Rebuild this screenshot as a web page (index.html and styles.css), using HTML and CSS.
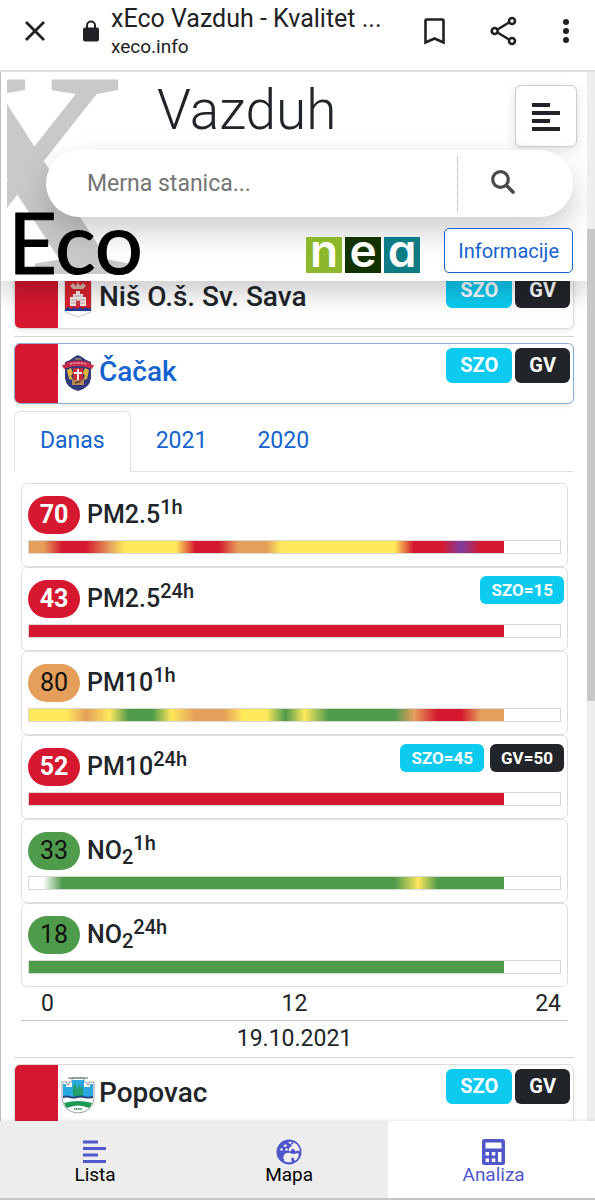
FILE: index.html
```html
<!DOCTYPE html>
<html lang="sr-Latn">
<head>
  <meta charset="UTF-8">
  <meta name="viewport" content="width=device-width, initial-scale=1.0">
  <title>xEco Vazduh - Kvalitet vazduha</title>
  <link rel="stylesheet" href="styles.css">
</head>
<body>
  <div class="browser-bar">
    <button class="icon-btn" aria-label="Zatvori">
      <svg width="20" height="20" viewBox="0 0 20 20"><path d="M1 1L19 19M19 1L1 19" stroke="#202124" stroke-width="2.8"/></svg>
    </button>
    <svg class="lock" width="16" height="22" viewBox="0 0 16 22"><path d="M4 8V5.500a4 4 0 0 1 8 0V8" fill="none" stroke="#202124" stroke-width="2"/><rect y="7.5" width="16" height="14" rx="2" fill="#202124"/></svg>
    <div class="page-info">
      <div class="page-title">xEco Vazduh - Kvalitet ...</div>
      <div class="page-host">xeco.info</div>
    </div>
    <div class="browser-actions">
      <button class="icon-btn" aria-label="Obeleži">
        <svg width="21" height="27" viewBox="0 0 21 27"><path d="M1.500 2.500a1 1 0 0 1 1-1h16a1 1 0 0 1 1 1V24.500l-9-4-9 4z" fill="none" stroke="#202124" stroke-width="2.6"/></svg>
      </button>
      <button class="icon-btn" aria-label="Podeli">
        <svg width="27" height="30" viewBox="0 0 27 30"><g fill="none" stroke="#202124" stroke-width="2.6"><path d="M7.500 13.500L19 6.500M7.500 16.500L19 23.500"/><circle cx="4.700" cy="15" r="3"/><circle cx="22" cy="5" r="3"/><circle cx="22" cy="25" r="3"/></g></svg>
      </button>
      <button class="icon-btn" aria-label="Meni">
        <svg width="8" height="26" viewBox="0 0 8 26"><g fill="#202124"><circle cx="4" cy="4" r="3"/><circle cx="4" cy="13" r="3"/><circle cx="4" cy="22" r="3"/></g></svg>
      </button>
    </div>
  </div>

  <div class="page">
    <div class="content">
      <header class="header">
        <svg class="logo" width="136" height="204" viewBox="0 0 136 204" role="img" aria-label="xEco">
          <text class="logo-x" x="126" y="198" text-anchor="end">X</text>
          <text class="logo-eco" x="1" y="198">Eco</text>
        </svg>
        <div class="header-top">
          <h1>Vazduh</h1>
          <button class="menu-btn" aria-label="Meni">
            <svg width="28" height="28" viewBox="0 0 28 28"><path d="M0 2h18M0 10h28M0 18h18M0 26h28" stroke="#212529" stroke-width="4"/></svg>
          </button>
        </div>
        <form class="search">
          <input type="text" placeholder="Merna stanica..." aria-label="Merna stanica">
          <button type="button" aria-label="Traži">
            <svg width="24" height="24" viewBox="0 0 24 24"><circle cx="9.500" cy="9.500" r="7.800" fill="none" stroke="#4a4a4a" stroke-width="3.200"/><path d="M15.500 15.500L22 22" stroke="#4a4a4a" stroke-width="3.600" stroke-linecap="round"/></svg>
          </button>
        </form>
        <div class="header-bottom">
          <svg class="nea" width="114" height="36" viewBox="0 0 114 36" role="img" aria-label="nea">
            <rect width="36" height="36" fill="#8cb82b"/>
            <rect x="39" width="36" height="36" fill="#123300"/>
            <rect x="78" width="36" height="36" fill="#0d7c85"/>
            <g class="nea-text" text-anchor="middle">
              <text x="18" y="30">n</text>
              <text x="57" y="30">e</text>
              <text x="96" y="30">a</text>
            </g>
          </svg>
          <button class="info-btn">Informacije</button>
        </div>
      </header>

      <main class="stations">
        <section class="station">
          <div class="station-card">
            <span class="level"></span>
            <svg class="crest" width="32" height="40" viewBox="0 0 32 40">
              <path d="M3 1H29V34L16 39L3 34z" fill="#fff" stroke="#9aa5b5" stroke-width=".6"/>
              <path d="M3 1H29V31H3z" fill="#d8232f"/>
              <path d="M8 8l3-3 3 3 2-4 2 4 3-3 3 3-3 3H11z" fill="#d9b7a8"/>
              <path d="M8 28V19h3v-3h3v-3h4v3h3v3h3v9h-6v-5h-4v5z" fill="#f3eeee"/>
              <path d="M9 22h14M12 18h8M9 25h14" stroke="#a87f85" stroke-width=".7"/>
              <path d="M3 31l3-2 3 2 3-2 3 2 3-2 3 2 3-2 3 2 2-2v4H3z" fill="#243c8f"/>
            </svg>
            <h2>Niš O.š. Sv. Sava</h2>
            <span class="badge szo">SZO</span><span class="badge gv">GV</span>
          </div>
        </section>

        <section class="station">
          <div class="station-card active">
            <span class="level"></span>
            <svg class="crest" width="32" height="40" viewBox="0 0 32 40">
              <path d="M3 9Q9 7 12 4L16 2L20 4Q23 7 29 9V25Q28 35 16 38Q4 35 3 25z" fill="#303a80"/>
              <path d="M0 12Q4 12 5 9Q16 6 27 9Q28 12 32 12L30 16Q16 10 2 16z" fill="#c92c48"/>
              <path d="M8 11Q16 9 24 11" fill="none" stroke="#f0d3d8" stroke-width="1" stroke-dasharray="2 .8"/>
              <path d="M11 15h10v10q-1 4-5 6q-4-2-5-6z" fill="#c52d35"/>
              <path d="M16 16v12M12 20h8" stroke="#fff" stroke-width="1.800"/>
              <path d="M5 17l4-2 2 5-2 3 2 4-4-1zM27 17l-4-2-2 5 2 3-2 4 4-1z" fill="#e2b63c"/>
              <path d="M10 27h12v5H10z" fill="#b68a57"/><path d="M13 30l6-2" stroke="#65372c" stroke-width="1.500"/>
              <path d="M13 6h6" stroke="#d9a84c" stroke-width="1.200"/>
            </svg>
            <h2>Čačak</h2>
            <span class="badge szo">SZO</span><span class="badge gv">GV</span>
          </div>

          <nav class="tabs">
            <a class="tab selected" href="#">Danas</a>
            <a class="tab" href="#">2021</a>
            <a class="tab" href="#">2020</a>
          </nav>

          <div class="params">
            <div class="param">
              <div class="param-head">
                <span class="value red">70</span>
                <span class="param-name">PM2.5<sup>1h</sup></span>
              </div>
              <div class="bar"><div class="fill pm25-1h"></div></div>
            </div>
            <div class="param">
              <div class="param-head">
                <span class="value red">43</span>
                <span class="param-name">PM2.5<sup>24h</sup></span>
                <span class="limit szo">SZO=15</span>
              </div>
              <div class="bar"><div class="fill red"></div></div>
            </div>
            <div class="param">
              <div class="param-head">
                <span class="value orange">80</span>
                <span class="param-name">PM10<sup>1h</sup></span>
              </div>
              <div class="bar"><div class="fill pm10-1h"></div></div>
            </div>
            <div class="param">
              <div class="param-head">
                <span class="value red">52</span>
                <span class="param-name">PM10<sup>24h</sup></span>
                <span class="limit szo">SZO=45</span>
                <span class="limit gv">GV=50</span>
              </div>
              <div class="bar"><div class="fill red"></div></div>
            </div>
            <div class="param">
              <div class="param-head">
                <span class="value green">33</span>
                <span class="param-name">NO<sub>2</sub><sup>1h</sup></span>
              </div>
              <div class="bar"><div class="fill no2-1h"></div></div>
            </div>
            <div class="param">
              <div class="param-head">
                <span class="value green">18</span>
                <span class="param-name">NO<sub>2</sub><sup>24h</sup></span>
              </div>
              <div class="bar"><div class="fill green"></div></div>
            </div>
            <div class="axis"><span>0</span><span>12</span><span>24</span></div>
            <div class="date">19.10.2021</div>
          </div>
        </section>

        <section class="station">
          <div class="station-card">
            <span class="level"></span>
            <svg class="crest" width="34" height="40" viewBox="0 0 34 40">
              <path d="M1 8h5v3h2V8h3V4h12v4h3v3h2V8h5v16Q32 38 17 39Q2 38 1 24z" fill="#fff" stroke="#7e8c92" stroke-width=".8"/>
              <path d="M2 10h3v3h6V6h12v7h6v-3h3v13H2z" fill="#2aa9e0"/>
              <path d="M7 4h20" stroke="#4d6b75" stroke-width="1.200"/>
              <path d="M12 22V12l3-3v7l3-5 2 4v-4l2 3v8z" fill="#25a06a"/>
              <path d="M2 22q4-1 7 0t7 0 7 0 9 0v2q-5 1-9 0t-7 0-7 0-7 0z" fill="#27467e"/>
              <path d="M3 29q14-4 28 0-1 3-3 5-11-5-22 0-2-2-3-5z" fill="#1c9a55"/>
              <path d="M13 35h8" stroke="#4c9b68" stroke-width="2" stroke-dasharray="1.500 .600"/>
            </svg>
            <h2>Popovac</h2>
            <span class="badge szo">SZO</span><span class="badge gv">GV</span>
          </div>
        </section>
      </main>
    </div>
    <div class="scrollbar"><div class="thumb"></div></div>
  </div>

  <nav class="bottom-nav">
    <a href="#">
      <svg width="24" height="26" viewBox="0 0 24 26"><path d="M0 3h15M0 9.500h23M0 16h15M0 22.500h23" stroke="#4f57cb" stroke-width="3"/></svg>
      Lista
    </a>
    <a href="#">
      <svg width="26" height="26" viewBox="0 0 26 26"><circle cx="13" cy="13" r="12.500" fill="#4f57cb"/><path d="M12 3.500l3-1 1 1.500-2 1zM17 3l4 2.500 2.500 4v3l-2-1-2 1-2-3-2 1-1 2-2-1 1-3 2-1v-2l2-1zM7 7l3-2 1 2-2 1zM4 10l2-1 1 2-2 1zM9 10l2-1 1 2-2 1zM8 16q2-3 6-2 2 1 4 1l4-1 1 2q-1 4-4 6l-2-4-2 2 1 3q-5 1-8-1 1-2-1-3z" fill="#eee"/></svg>
      Mapa
    </a>
    <a class="current" href="#">
      <svg width="24" height="26" viewBox="0 0 24 26"><rect width="23" height="26" rx="2.500" fill="#4f57cb"/><path d="M3.500 3.500h16v6h-16zM3.500 13h3.500v3.500H3.500zM9.800 13h3.500v3.500H9.800zM3.500 19.500h3.500V23H3.500zM9.800 19.500h3.500V23H9.800zM16 13h3.500v10H16z" fill="#fff"/></svg>
      Analiza
    </a>
  </nav>
</body>
</html>
```

FILE: styles.css
```css
* {
  box-sizing: border-box;
}
body {
  margin: 0;
  height: 100vh;
  display: flex;
  flex-direction: column;
  font-family: Roboto, "Liberation Sans", sans-serif;
  font-size: 23px;
  color: #212529;
  background: #fff;
  overflow: hidden;
}
svg {
  display: block;
  flex: none;
}
a {
  text-decoration: none;
}
button {
  font-family: inherit;
  cursor: pointer;
}

/* browser */
.browser-bar {
  flex: none;
  display: flex;
  align-items: center;
  padding: 3px 25px 11px;
  border-bottom: 2px solid #dedddb;
}
.icon-btn {
  padding: 0;
  border: 0;
  background: none;
}
.lock {
  margin: 0 12px 0 38px;
}
.page-info {
  flex: 1;
  color: #202124;
}
.page-title {
  font-size: 25px;
  line-height: 32px;
}
.page-host {
  font-size: 19px;
  line-height: 24px;
}
.browser-actions {
  display: flex;
  align-items: center;
  gap: 45px;
}

/* page */
.page {
  flex: 1;
  min-height: 0;
  display: flex;
  border-left: 1px solid #c0c0c0;
}
.content {
  flex: 1;
  min-width: 0;
  overflow: hidden;
}
.scrollbar {
  width: 8px;
  display: grid;
  grid-template-rows: 15% 45% 1fr;
  background: #eee;
}
.thumb {
  grid-row: 2;
  background: #c8c8c8;
}
.header {
  position: relative;
  z-index: 1;
  padding: 0 14px 8px 0;
  background: #fff;
  box-shadow: 0 12px 24px rgba(0, 0, 0, 0.2);
}
.logo {
  position: absolute;
  left: 6px;
  top: 4px;
}
.logo-x {
  font-family: "Liberation Serif", serif;
  font-weight: bold;
  font-size: 297px;
  fill: #c9c9c9;
}
.logo-eco {
  font-family: Lato, sans-serif;
  font-size: 85px;
  stroke: #000;
  stroke-width: 1px;
  stroke-linejoin: round;
}
.header-top {
  display: flex;
  justify-content: space-between;
  align-items: flex-start;
  padding-left: 156px;
}
h1 {
  margin: 0;
  font-size: 55px;
  font-weight: 300;
  line-height: 76px;
}
.menu-btn {
  display: flex;
  align-items: center;
  justify-content: center;
  width: 62px;
  height: 62px;
  margin: 13px -4px 0 0;
  padding: 2px 0 0;
  border: 1px solid #ccc;
  border-radius: 6px;
  background: #fff;
  box-shadow: 0 3px 12px rgba(0, 0, 0, 0.12);
}
.search {
  position: relative;
  display: flex;
  height: 67px;
  margin: 2px 0 11px 45px;
  padding: 6px 0;
  border-radius: 34px;
  background: #fff;
  box-shadow: 0 14px 32px rgba(0, 0, 0, 0.2);
}
.search input {
  flex: 1;
  min-width: 0;
  padding: 0 0 0 41px;
  border: 0;
  outline: 0;
  background: none;
  font-family: inherit;
  font-size: 23px;
}
.search input::placeholder {
  color: #757575;
}
.search button {
  width: 116px;
  padding: 0 0 4px 33px;
  border: 0;
  border-left: 1px dotted #aaa;
  background: none;
}
.header-bottom {
  position: relative;
  display: flex;
  justify-content: flex-end;
  align-items: flex-end;
  gap: 24px;
}
.nea-text {
  font-family: Inter, sans-serif;
  font-weight: 600;
  font-size: 46px;
  font-feature-settings: "cv11";
  fill: #fff;
}
.info-btn {
  height: 45px;
  padding: 0 13px;
  border: 1px solid #1463cf;
  border-radius: 5px;
  background: #fff;
  color: #1463cf;
  font-size: 20px;
}

/* stations */
.stations {
  margin-top: -13px;
  padding: 0 13px;
}
.station {
  margin-bottom: 6px;
  padding-bottom: 7px;
  border-bottom: 1px solid #d5d5d5;
}
.station-card {
  display: flex;
  height: 61px;
  border: 1px solid #dcdcdc;
  border-radius: 6px;
  overflow: hidden;
  box-shadow: 0 2px 4px rgba(0, 0, 0, 0.08);
}
.station-card.active {
  border-color: #86acd9;
}
.level {
  width: 43px;
  background: #d5182f;
}
.crest {
  width: 34px;
  height: 40px;
  margin: 9px 4px 0 3px;
}
h2 {
  flex: 1;
  margin: 0;
  font-size: 28px;
  font-weight: 500;
  line-height: 56px;
}
.active h2 {
  color: #1463cf;
}
.badge {
  height: 35px;
  margin: 4px 3px 0 0;
  padding: 0 14px;
  border-radius: 6px;
  color: #fff;
  font-size: 20px;
  font-weight: 700;
  line-height: 35px;
}
.szo {
  background: #0dcaf0;
}
.gv {
  background: #212529;
}

.tabs {
  display: flex;
  margin-top: 7px;
  border-bottom: 1px solid #dee2e6;
}
.tab {
  height: 60px;
  padding: 0 25px;
  color: #1463cf;
  line-height: 59px;
}
.tab.selected {
  height: 61px;
  margin-bottom: -1px;
  border: 1px solid #dee2e6;
  border-bottom: 0;
  border-radius: 6px 6px 0 0;
  background: #fff;
  line-height: 57px;
}

/* parameters */
.params {
  padding: 11px 6px 0 7px;
}
.param {
  height: 84px;
  padding: 12px 6px 0;
  border: 1px solid #dedede;
  border-radius: 6px;
}
.param-head {
  display: flex;
  align-items: center;
  height: 38px;
}
.value {
  width: 52px;
  height: 38px;
  border-radius: 19px;
  font-size: 25px;
  line-height: 38px;
  text-align: center;
  color: #111;
}
.value.red {
  color: #fff;
  font-weight: 700;
}
.red {
  background: #d5182f;
}
.orange {
  background: #e59f5b;
}
.green {
  background: #4e9b4b;
}
.param-name {
  flex: 1;
  padding-left: 7px;
  font-size: 25px;
  font-weight: 500;
  line-height: 38px;
}
sup,
sub {
  position: relative;
  font-size: 20px;
  line-height: 0;
  vertical-align: baseline;
}
sup {
  top: -9px;
}
sub {
  top: 5px;
}
.limit {
  align-self: flex-start;
  height: 28px;
  margin: -4px -3px 0 9px;
  padding: 0 11px;
  border-radius: 6px;
  color: #fff;
  font-size: 17px;
  font-weight: 700;
  line-height: 28px;
}
.bar {
  height: 14px;
  margin-top: 6px;
  border: 1px solid #d8d8d8;
}
.fill {
  width: 89.5%;
  height: 100%;
}
.pm25-1h {
  background: linear-gradient(to right, #e59f5b 3%, #d5182f 7% 12%, #e59f5b 17%, #ffe85c 20% 31%, #d5182f 35% 40%, #e59f5b 44% 50%, #ffe85c 53% 77%, #d5182f 81% 87%, #7d3fa0 91%, #d5182f 95%);
}
.pm10-1h {
  background: linear-gradient(to right, #ffe85c 8%, #e59f5b 12%, #ffe85c 17%, #4e9b4b 21% 26%, #ffe85c 30%, #e59f5b 35% 41%, #ffe85c 45% 50%, #4e9b4b 54%, #ffe85c 58%, #4e9b4b 63% 77%, #e59f5b 81%, #d5182f 86% 91%, #e59f5b 95%);
}
.no2-1h {
  background: linear-gradient(to right, #fff 3%, #4e9b4b 7% 77%, #ffe85c 82%, #4e9b4b 86%);
}
.axis {
  display: flex;
  justify-content: space-between;
  padding: 0 7px 0 20px;
  line-height: 33px;
  border-bottom: 1px solid #c8c8c8;
}
.date {
  margin-bottom: -7px;
  line-height: 36px;
  text-align: center;
}

/* bottom nav */
.bottom-nav {
  flex: none;
  position: relative;
  z-index: 2;
  display: flex;
  background: #ededed;
  border-bottom: 2px solid #c4c4c4;
  box-shadow: 0 0 4px rgba(0, 0, 0, 0.15);
}
.bottom-nav a {
  flex: 15 15 0;
  display: flex;
  flex-direction: column;
  align-items: center;
  height: 77px;
  padding: 18px 4px 0 0;
  color: #000;
  font-size: 19px;
  line-height: 19px;
}
.bottom-nav .current {
  flex: 16 16 0;
  padding: 18px 0 0 4px;
  background: #fff;
  color: #4f57cb;
}
```
